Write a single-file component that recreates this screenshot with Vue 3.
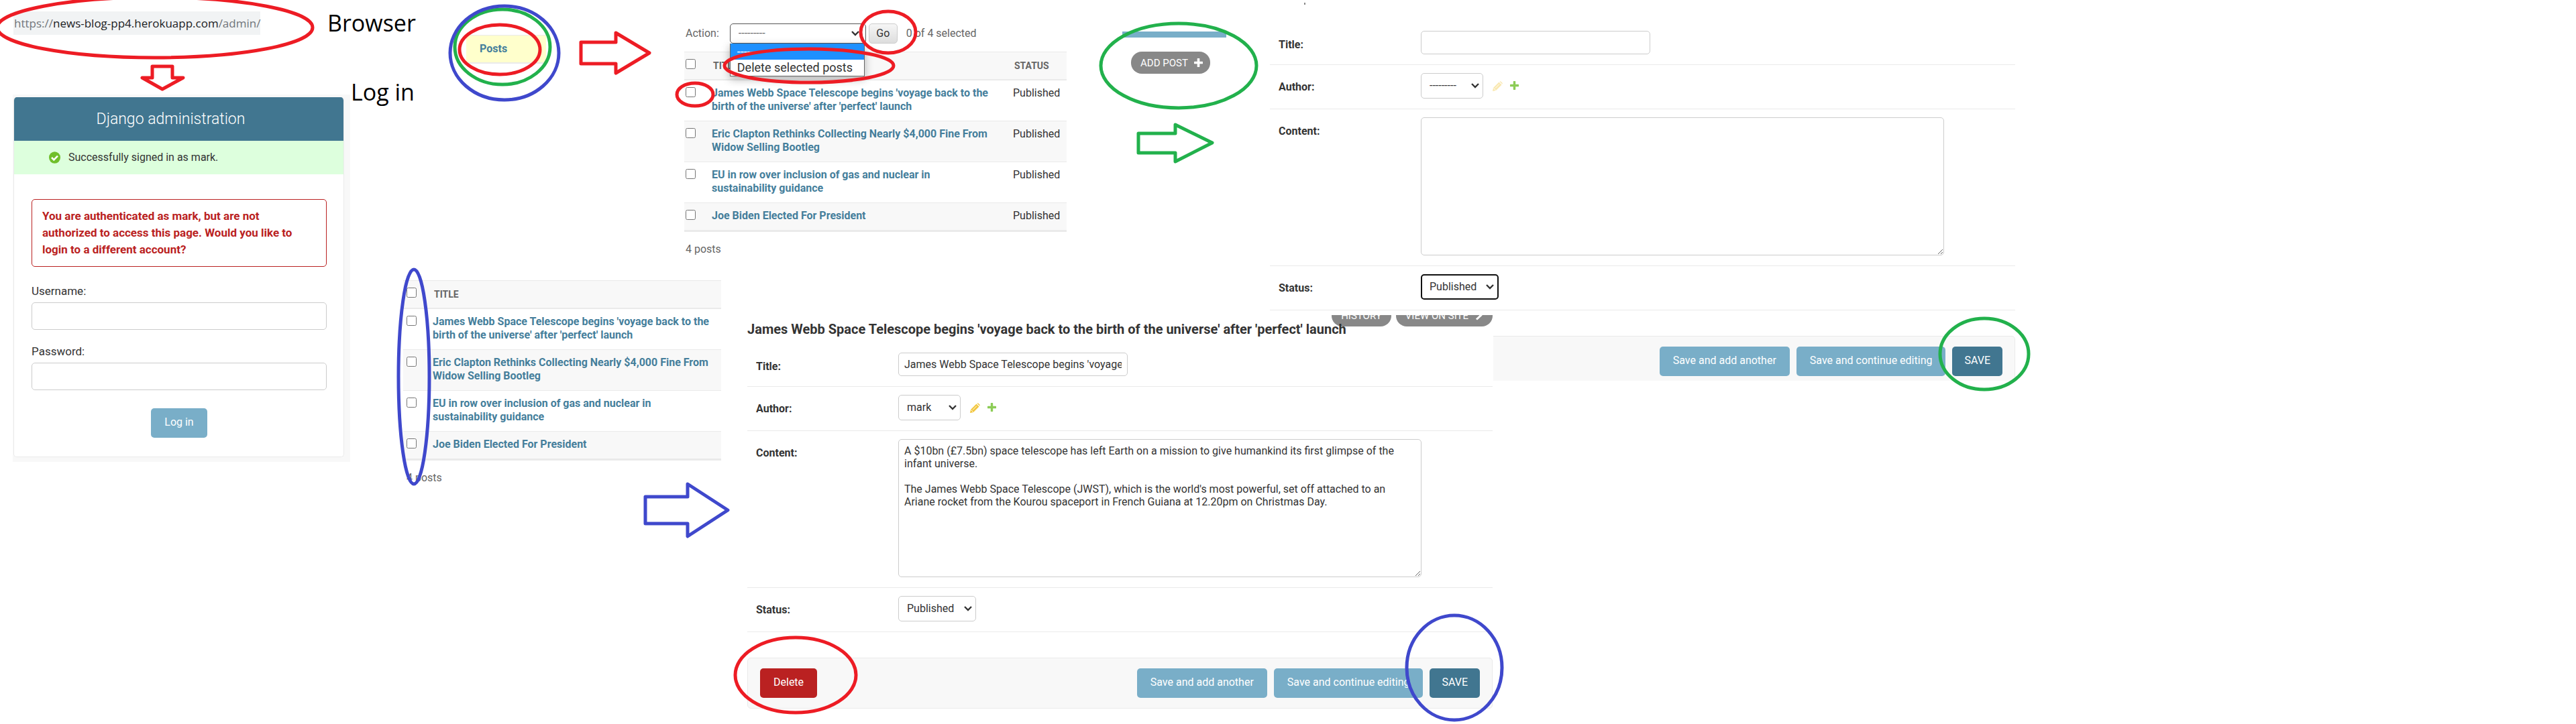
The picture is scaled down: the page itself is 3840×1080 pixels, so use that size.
<script setup>
import { ref } from 'vue'

const posts = [
  "James Webb Space Telescope begins 'voyage back to the birth of the universe' after 'perfect' launch",
  'Eric Clapton Rethinks Collecting Nearly $4,000 Fine From Widow Selling Bootleg',
  'EU in row over inclusion of gas and nuclear in sustainability guidance',
  'Joe Biden Elected For President',
]

const lists = [
  { id: 'delete', actions: true, status: true },
  { id: 'select', actions: false, status: false },
]

const forms = ref([
  { id: 'add', heading: '', title: '', author: '---------', content: '', status: 'Published' },
  {
    id: 'edit',
    heading: posts[0],
    title: posts[0],
    author: 'mark',
    content:
      'A $10bn (£7.5bn) space telescope has left Earth on a mission to give humankind its first glimpse of the infant universe.\n\n' +
      "The James Webb Space Telescope (JWST), which is the world's most powerful, set off attached to an Ariane rocket from the Kourou spaceport in French Guiana at 12.20pm on Christmas Day.",
    status: 'Published',
  },
])

const red = '#ed1c24'
const green = '#22b14c'
const blue = '#3f48cc'

const rings = [
  { c: red, x: 231, y: 41, rx: 235, ry: 45 },
  { c: green, x: 749, y: 70, rx: 71, ry: 56 },
  { c: blue, x: 752, y: 79, rx: 81, ry: 70 },
  { c: red, x: 745, y: 74, rx: 60, ry: 37 },
  { c: red, x: 1324, y: 48, rx: 41, ry: 31 },
  { c: red, x: 1206, y: 98, rx: 126, ry: 25 },
  { c: red, x: 1036, y: 141, rx: 27, ry: 17 },
  { c: blue, x: 617, y: 562, rx: 23, ry: 160 },
  { c: green, x: 1757, y: 98, rx: 116, ry: 63 },
  { c: green, x: 2958, y: 528, rx: 66, ry: 53 },
  { c: red, x: 1186, y: 1007, rx: 90, ry: 56 },
  { c: blue, x: 2168, y: 996, rx: 71, ry: 78 },
]

const arrows = [
  { c: red, p: '227,99 257,99 257,116 273,116 242,133 212,116 227,116' },
  { c: red, p: '866,63 918,63 918,49 968,79 918,109 918,95 866,95' },
  { c: green, p: '1697,199 1752,199 1752,186 1807,213 1752,241 1752,228 1697,228' },
  { c: blue, p: '962,741 1025,741 1025,722 1085,761 1025,800 1025,781 962,781' },
]
</script>

<template>
  <main class="board">
    <a class="url" href="#"><span>https://</span>news-blog-pp4.herokuapp.com<span>/admin/</span></a>
    <p class="note note-browser">Browser</p>
    <p class="note note-login">Log in</p>

    <section class="login">
      <div class="card">
        <h1>Django administration</h1>
        <p class="message">
          <svg width="17" height="18" viewBox="0 0 17 18" aria-hidden="true">
            <ellipse cx="8.5" cy="9" rx="8.5" ry="8.7" fill="#70bf2b" />
            <path d="M4 9l3.3 3.3L13 6.6" fill="none" stroke="#fff" stroke-width="2.6" />
          </svg>
          Successfully signed in as mark.
        </p>
        <form class="login-form" @submit.prevent>
          <p class="error">You are authenticated as mark, but are not authorized to access this page. Would you like to login to a different account?</p>
          <label for="username">Username:</label>
          <input id="username" type="text" class="field">
          <label for="password">Password:</label>
          <input id="password" type="password" class="field">
          <button type="submit" class="btn">Log in</button>
        </form>
      </div>
    </section>

    <nav class="model-row"><a href="#">Posts</a></nav>

    <section v-for="l in lists" :key="l.id" class="changelist" :class="l.id">
      <div v-if="l.actions" class="actions">
        <label for="action">Action:</label>
        <div class="action-select">
          <select id="action" class="field">
            <option>---------</option>
          </select>
          <ul role="listbox" aria-label="Action">
            <li role="option" class="active">---------</li>
            <li role="option">Delete selected posts</li>
          </ul>
        </div>
        <button type="button" class="go">Go</button>
        <span>0 of 4 selected</span>
      </div>
      <table>
        <thead>
          <tr>
            <th class="check"><input type="checkbox" aria-label="Select all posts"></th>
            <th class="title">TITLE</th>
            <th v-if="l.status" class="status">STATUS</th>
          </tr>
        </thead>
        <tbody>
          <tr v-for="p in posts" :key="p">
            <td class="check"><input type="checkbox" :aria-label="p"></td>
            <td class="title"><a href="#">{{ p }}</a></td>
            <td v-if="l.status" class="status">Published</td>
          </tr>
        </tbody>
      </table>
      <p class="count">4 posts</p>
    </section>

    <section class="tools">
      <div class="bar"></div>
      <a class="pill" href="#">ADD POST
        <svg width="13" height="13" viewBox="0 0 13 13" aria-hidden="true"><path d="M6.500 1v11M1 6.500h11" stroke="#fff" stroke-width="3.6" stroke-linecap="round" /></svg>
      </a>
    </section>

    <section v-for="f in forms" :key="f.id" class="change-form" :class="f.id">
      <i v-if="f.id === 'add'" class="speck"></i>
      <template v-if="f.heading">
        <div class="object-tools">
          <a class="pill" href="#">HISTORY</a>
          <a class="pill" href="#">VIEW ON SITE
            <svg width="13" height="15" viewBox="0 0 13 15" aria-hidden="true"><path d="M3 1.500l6.500 6L3 13.500" fill="none" stroke="#fff" stroke-width="3" /></svg>
          </a>
        </div>
        <h2>{{ f.heading }}</h2>
      </template>
      <form @submit.prevent>
        <div class="row">
          <label :for="f.id + '-title'">Title:</label>
          <input :id="f.id + '-title'" v-model="f.title" type="text" class="field title-field">
        </div>
        <div class="row">
          <label :for="f.id + '-author'">Author:</label>
          <select :id="f.id + '-author'" v-model="f.author" class="field author-field">
            <option>---------</option>
            <option>mark</option>
          </select>
          <a class="related" href="#" aria-label="Change author" :class="{ disabled: f.id === 'add' }">
            <svg width="15" height="15" viewBox="0 0 15 15"><path d="M0 15l1-5L9.500 1.500l4 4L5 14z" fill="#efb80b" opacity=".8" /><path d="M10.500 .8q1-1 2 0l1.800 1.800q1 1 0 2z" fill="#efb80b" opacity=".8" /><path d="M1.500 10.500l3 3M4 10.500l6-6" stroke="#fff" stroke-width="1" /></svg>
          </a>
          <a class="related" href="#" aria-label="Add author">
            <svg width="13" height="13" viewBox="0 0 13 13"><path d="M6.500 1v11M1 6.500h11" stroke="#8ccc56" stroke-width="3.4" stroke-linecap="round" /></svg>
          </a>
        </div>
        <div class="row">
          <label :for="f.id + '-content'">Content:</label>
          <textarea :id="f.id + '-content'" v-model="f.content" class="field"></textarea>
        </div>
        <div class="row">
          <label :for="f.id + '-status'">Status:</label>
          <select :id="f.id + '-status'" v-model="f.status" class="field status-field">
            <option>Published</option>
            <option>Draft</option>
          </select>
        </div>
        <div class="submit-row">
          <button v-if="f.heading" type="button" class="btn danger">Delete</button>
          <button type="submit" class="btn">Save and add another</button>
          <button type="submit" class="btn">Save and continue editing</button>
          <button type="submit" class="btn primary">SAVE</button>
        </div>
      </form>
    </section>

    <svg class="marks" aria-hidden="true">
      <ellipse v-for="(r, i) in rings" :key="'r' + i" :cx="r.x" :cy="r.y" :rx="r.rx" :ry="r.ry" :stroke="r.c" />
      <polygon v-for="(a, i) in arrows" :key="'a' + i" :points="a.p" :stroke="a.c" />
    </svg>
  </main>
</template>

<style>
body {
  margin: 0;
  background: #fff;
}
</style>

<style scoped>
.board {
  position: relative;
  min-height: 1080px;
  overflow: hidden;
  background: #fff;
  color: #333;
  font: 16px/20px Roboto, "Liberation Sans", sans-serif;
}
.board * { box-sizing: border-box; }
p, h1, h2, ul { margin: 0; }
a { color: #447e9b; text-decoration: none; }
input, select, textarea, button { font: inherit; color: inherit; margin: 0; }

/* pieces placed on the board */
.url, .note, .login, .model-row, .changelist, .tools, .change-form, .marks { position: absolute; }
.marks {
  left: 0;
  top: 0;
  width: 100%;
  height: 100%;
  pointer-events: none;
  fill: none;
  stroke-width: 5;
  stroke-linejoin: round;
}

.url {
  left: 20px;
  top: 17px;
  padding-left: 1px;
  white-space: nowrap;
  background: #f1f3f4;
  color: #202124;
  font: 17px/35px "Open Sans", "Noto Sans", sans-serif;
}
.url span { color: #70757a; }
.note {
  color: #000;
  font: 34px/44px "Open Sans", "Noto Sans", sans-serif;
  white-space: nowrap;
}
.note-browser { left: 488px; top: 12px; }
.note-login { left: 523px; top: 115px; }

.field {
  border: 1px solid #ccc;
  border-radius: 5px;
  background-color: #fff;
  outline: none;
}
select.field {
  appearance: none;
  height: 38px;
  padding: 0 12px;
  background-image: url("data:image/svg+xml,%3Csvg xmlns='http://www.w3.org/2000/svg' width='12' height='8'%3E%3Cpath d='M1 1l5 5 5-5' fill='none' stroke='%23333' stroke-width='2.400'/%3E%3C/svg%3E");
  background-repeat: no-repeat;
  background-position: right 5px center;
}
.btn {
  height: 44px;
  padding: 0 20px 2px;
  border: 0;
  border-radius: 5px;
  background: #79aec8;
  color: #fff;
  white-space: nowrap;
}
.btn.primary { padding: 0 18px 2px; background: #417690; }
.btn.danger { background: #ba2121; margin-right: auto; }

.login {
  left: 19px;
  top: 141px;
  padding: 4px 9px 7px 1px;
  background: #f8f8f8;
}
.card {
  width: 493px;
  border: 1px solid #eaeaea;
  border-top: 0;
  border-radius: 5px;
  overflow: hidden;
  background: #fff;
}
.card h1 {
  padding-right: 24px;
  background: #417690;
  color: #fff;
  font-size: 23px;
  font-weight: 300;
  line-height: 65px;
  text-align: center;
}
.message {
  display: flex;
  align-items: center;
  gap: 12px;
  height: 50px;
  padding-left: 52px;
  background: #dfd;
}
.login-form {
  display: flex;
  flex-direction: column;
  padding: 37px 25px 28px 26px;
}
.error {
  margin-bottom: 24px;
  padding: 12px 15px;
  border: 1px solid #ba2121;
  border-radius: 5px;
  color: #ba2121;
  font-size: 17px;
  font-weight: 700;
  line-height: 25px;
}
.login-form label { margin-bottom: 5px; font-size: 17px; line-height: 24px; }
.login-form .field { height: 41px; margin-bottom: 20px; padding: 0 8px; }
.login-form .btn { align-self: center; margin-top: 7px; }

.model-row {
  left: 695px;
  top: 52px;
  width: 119px;
  padding: 10px 20px;
  border-top: 1px solid #eaeaea;
  border-bottom: 2px solid #eaeaea;
  background: #ffc;
  font-weight: 700;
}

.changelist.delete { left: 1020px; top: 35px; width: 570px; }
.changelist.select { left: 601px; top: 418px; width: 474px; }
.actions {
  display: flex;
  align-items: center;
  height: 30px;
  margin-bottom: 12px;
  padding-left: 2px;
  color: #666;
}
.action-select { position: relative; width: 203px; margin: 0 4px 0 16px; }
.action-select select {
  display: block;
  width: 100%;
  height: 30px;
  border-color: #555;
  background-position: right 9px center;
}
.action-select ul {
  position: absolute;
  top: 30px;
  left: 0;
  width: 201px;
  padding: 0;
  list-style: none;
  border: 1px solid #666;
  border-top: 0;
  background: #fff;
  box-shadow: 0 4px 12px rgba(0, 0, 0, .3);
  color: #333;
  font-size: 18px;
  line-height: 24px;
}
.action-select li { padding-left: 10px; }
.action-select .active { background: #1e90ff; color: #fff; }
.go {
  width: 43px;
  height: 30px;
  margin-right: 13px;
  padding: 0;
  border: 1px solid #ccc;
  border-radius: 5px;
  background: linear-gradient(#f6f6f6, #ddd);
  color: #333;
}

table {
  width: 100%;
  table-layout: fixed;
  border-spacing: 0;
  border-bottom: 2px solid #eaeaea;
}
th, td {
  padding: 9px 10px 11px;
  border-bottom: 1px solid #eaeaea;
  text-align: left;
  vertical-align: top;
}
th {
  height: 42px;
  padding: 10px 12px;
  border-top: 1px solid #eaeaea;
  border-bottom-width: 2px;
  background: #f8f8f8;
  color: #666;
  font-size: 14px;
  font-weight: 700;
}
tbody tr:nth-child(even) { background: #f8f8f8; }
td a { font-weight: 700; }
.check { width: 31px; padding: 10px 0 10px 2px; }
.select .check { width: 34px; padding-left: 5px; }
.check input { display: block; width: 15px; height: 15px; }
.status { width: 90px; }
td.title { padding-right: 18px; }
.select td.title { padding-right: 12px; }
.count { padding: 16px 2px; color: #666; }
.select .count { padding-left: 5px; }

.tools { left: 1673px; top: 47px; width: 155px; }
.bar { height: 9px; margin-bottom: 21px; background: #79aec8; }
.pill {
  display: inline-flex;
  align-items: center;
  gap: 9px;
  height: 33px;
  padding: 0 14px;
  border-radius: 16px;
  background: #888;
  color: #fff;
  font-size: 15px;
  white-space: nowrap;
}
.tools .pill { margin-left: 13px; padding-right: 11px; }

.change-form { width: 1111px; background: #fff; }
.change-form.add { left: 1893px; top: 0; height: 568px; padding-top: 34px; overflow: hidden; }
.change-form.edit { left: 1114px; top: 470px; width: 1112px; padding-right: 1px; overflow: hidden; }
.speck { position: absolute; left: 51px; top: 4px; width: 2px; height: 3px; background: #888; }
.object-tools { position: absolute; top: -16px; right: 1px; display: flex; gap: 7px; }
h2 {
  position: relative;
  padding: 9px 0 11px;
  font-size: 20px;
  font-weight: 700;
  line-height: 24px;
}
.row {
  display: flex;
  align-items: flex-start;
  padding: 12px 13px 15px;
  border-bottom: 1px solid #eaeaea;
}
.row label {
  width: 212px;
  padding-top: 10px;
  font-weight: 700;
  line-height: 22px;
}
.title-field { width: 342px; height: 35px; padding: 0 8px; }
.author-field { width: 93px; }
.status-field { width: 116px; }
.add .status-field { border: 2px solid #101010; padding: 0 11px; }
.row textarea {
  width: 780px;
  height: 206px;
  padding: 7px 8px;
  line-height: 19px;
}
.related { display: flex; margin: 12px 0 0 14px; }
.related + .related { margin-left: 11px; }
.related.disabled { opacity: .4; }
.submit-row {
  display: flex;
  justify-content: flex-end;
  gap: 10px;
  margin-top: 38px;
  padding: 15px 18px;
  border: 1px solid #eaeaea;
  border-radius: 5px;
  background: #f8f8f8;
}
</style>
